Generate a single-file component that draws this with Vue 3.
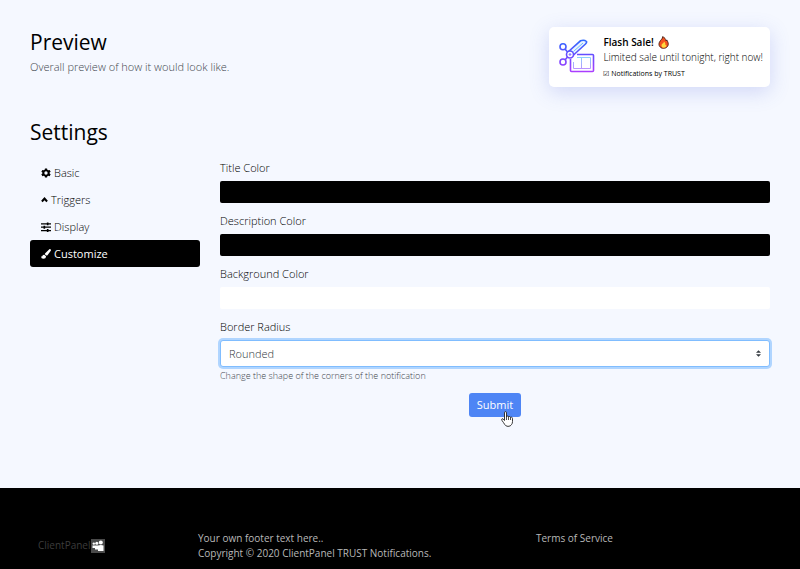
<template>
  <div class="page">
    <main class="content">
      <header class="preview">
        <div>
          <h1>Preview</h1>
          <p class="subtitle">Overall preview of how it would look like.</p>
        </div>

        <div class="toast">
          <svg class="toast-icon" viewBox="0 0 36 36" fill="none" stroke="url(#toast-gradient)" aria-hidden="true">
            <defs>
              <linearGradient id="toast-gradient" gradientUnits="userSpaceOnUse" x1="0" y1="0" x2="0" y2="34">
                <stop offset="0" stop-color="#2b6cff" />
                <stop offset="0.5" stop-color="#6a4cff" />
                <stop offset="1" stop-color="#b03cff" />
              </linearGradient>
              <linearGradient id="ticket-gradient" gradientUnits="userSpaceOnUse" x1="0" y1="16" x2="0" y2="31">
                <stop offset="0" stop-color="#7fe0fb" />
                <stop offset="1" stop-color="#c08cff" />
              </linearGradient>
            </defs>
            <path stroke-width="1.6" d="M18 15.500H33.500Q34.500 15.500 34.500 16.500V31.500Q34.500 32.500 33.500 32.500H12.500Q11.500 32.500 11.500 31.500V20" />
            <path stroke="url(#ticket-gradient)" stroke-width="1" d="M18 18.500H31.500V29.500H14.500V23M22.500 18.500V29.500" />
            <path stroke-width="1.600" fill="#eaf4ff" d="M9.500 12.500L21.500 1.800Q25 .4 27.500 2.500Q28 3.500 26.500 5L14 16.500Z" />
            <path stroke="#69b8ff" stroke-width="1" d="M14.500 12.500L24 4" />
            <circle cx="11" cy="15.500" r="3.500" stroke-width="1.600" fill="#fff" />
            <circle cx="11" cy="15.500" r="0.800" stroke-width="1" />
            <circle cx="4" cy="7.800" r="3" stroke-width="1.600" />
            <circle cx="4" cy="23" r="3" stroke-width="1.600" />
            <path stroke-width="1.600" d="M6 10L8.500 13M6 21L8.500 18" />
          </svg>
          <div>
            <div class="toast-title">
              Flash Sale!
              <svg class="flame" viewBox="0 0 12 14" aria-hidden="true">
                <path d="M5 .6C5.400 3 2.700 4 1.600 6.600C-.2 10 2.500 13.400 6 13.400C9.600 13.400 12 10.500 11 7.200C10.700 6 10 5 9.600 4.200L8.800 5.300C8.600 3.200 7.200 1.500 5 .6Z" fill="#f4511e" stroke="#3a1408" stroke-width=".9" />
                <path d="M6.500 6C6.500 8 4.700 7.800 4 9.300C3.400 11 4.300 12.700 6.100 12.800C8.200 12.800 9.500 11.400 9 9.500L8 10C8.300 8.400 7.800 7 6.500 6Z" fill="#ffd83b" />
              </svg>
            </div>
            <div class="toast-text">Limited sale until tonight, right now!</div>
            <div class="toast-brand">☑ Notifications by TRUST</div>
          </div>
        </div>
      </header>

      <h2>Settings</h2>

      <div class="row">
        <nav class="tabs">
          <button
            v-for="tab in tabs"
            :key="tab.id"
            type="button"
            :class="{ active: current === tab.id }"
            @click="current = tab.id"
          >
            <svg :class="{ narrow: tab.narrow }" :viewBox="tab.box" aria-hidden="true">
              <path :d="tab.icon" fill="currentColor" fill-rule="evenodd" />
            </svg>
            <span>{{ tab.label }}</span>
          </button>
        </nav>

        <form class="fields" @submit.prevent>
          <div v-for="field in colors" :key="field.id" class="field">
            <label :for="field.id">{{ field.label }}</label>
            <input :id="field.id" v-model="field.value" type="color" />
          </div>

          <div class="field">
            <label for="radius">Border Radius</label>
            <div class="select-wrap">
              <select id="radius" v-model="radius">
                <option value="straight">Straight</option>
                <option value="rounded">Rounded</option>
                <option value="round">Round</option>
              </select>
              <svg class="arrows" viewBox="0 0 6 8" aria-hidden="true">
                <path d="M3 0L6 3H0ZM3 8L0 5H6Z" fill="#343a40" />
              </svg>
            </div>
            <small>Change the shape of the corners of the notification</small>
          </div>

          <div class="actions">
            <button type="submit" class="submit">Submit</button>
            <svg class="pointer" viewBox="0 0 12 16" aria-hidden="true">
              <path d="M3.500 9.500V1.800Q3.500 .6 4.500 .6Q5.500 .6 5.500 1.800V6Q5.600 4.900 6.500 5Q7.500 5 7.500 6Q7.700 5.300 8.500 5.500Q9.500 5.600 9.500 6.600Q9.900 6 10.600 6.200Q11.500 6.500 11.500 7.500V10.500Q11.500 12.500 10.500 13.600Q9.500 15.400 7 15.400Q4.800 15.300 3.800 13.600Q2.500 11.500 1 9.500Q.2 8.300 1 7.800Q2 7.300 3.500 9.500Z" fill="#fff" stroke="#222" stroke-width=".9" />
              <path d="M5.500 6V9M7.500 6V9M9.500 6.600V9" stroke="#222" stroke-width=".8" />
            </svg>
          </div>
        </form>
      </div>
    </main>

    <footer class="footer">
      <a class="logo" href="#">
        <span>ClientPanel</span>
        <svg viewBox="0 0 14 14" aria-hidden="true">
          <rect width="14" height="14" fill="#4a4a4a" />
          <g fill="#fff">
            <circle cx="2.800" cy="4.600" r="1.200" />
            <circle cx="5.800" cy="4.200" r="1.500" />
            <circle cx="9.800" cy="3.600" r="2" />
            <path d="M1.500 6.500H4V9H1.500ZM4 6.500H7V10.500H4ZM7 6.500Q10 5.500 12.500 6.500V12H7Z" />
          </g>
        </svg>
      </a>
      <div class="footer-text">
        <div>Your own footer text here..</div>
        <div>Copyright © 2020 ClientPanel TRUST Notifications.</div>
      </div>
      <a class="terms" href="#">Terms of Service</a>
    </footer>
  </div>
</template>

<script setup>
import { ref } from 'vue'

const current = ref('customize')
const radius = ref('rounded')

const colors = ref([
  { id: 'title-color', label: 'Title Color', value: '#000000' },
  { id: 'description-color', label: 'Description Color', value: '#000000' },
  { id: 'background-color', label: 'Background Color', value: '#ffffff' },
])

const tabs = [
  {
    id: 'basic',
    label: 'Basic',
    box: '0 0 24 24',
    icon: 'M9.500 1H14.500L15.200 4.300L17.500 5.600L20.700 4.500L23.200 8.800L20.700 11V13L23.200 15.200L20.700 19.500L17.500 18.400L15.200 19.700L14.500 23H9.500L8.800 19.700L6.500 18.400L3.300 19.500L.8 15.200L3.300 13V11L.8 8.800L3.300 4.500L6.500 5.600L8.800 4.300ZM12 8A4 4 0 1 0 12 16A4 4 0 1 0 12 8Z',
  },
  {
    id: 'triggers',
    label: 'Triggers',
    box: '0 0 16 24',
    narrow: true,
    icon: 'M8 5L16 13.500L12.500 17.500L8 12.500L3.500 17.500L0 13.500Z',
  },
  {
    id: 'display',
    label: 'Display',
    box: '0 0 24 24',
    icon: 'M0 3H14V1H18V3H24V6H18V8H14V6H0ZM0 11H6V9H10V11H24V14H10V16H6V14H0ZM0 19H14V17H18V19H24V22H18V24H14V22H0Z',
  },
  {
    id: 'customize',
    label: 'Customize',
    box: '0 0 24 24',
    icon: 'M20 .6Q22 -.4 23.400 1Q24.500 2.300 23.500 4L16 14.500Q14.500 16.300 12.800 15.500L9.800 13Q8.800 11.500 10.200 10ZM8 14L12 17.500Q12 23.500 5.500 23.500Q.3 23.500 0 17.500Q2 19 3 17.500Q4.500 13.500 8 14Z',
  },
]
</script>

<style>
body {
  margin: 0;
  background: #f5f8ff;
}
</style>

<style scoped>
.page {
  display: flex;
  flex-direction: column;
  min-height: 100vh;
  font-family: 'Open Sans', 'Noto Sans', sans-serif;
  font-size: 11px;
  font-weight: 300;
  line-height: 16px;
  color: #000;
}
button,
select,
input {
  font: inherit;
  margin: 0;
}
.content {
  padding: 27px 30px 71px;
}
.preview {
  display: flex;
  justify-content: space-between;
  align-items: flex-start;
}
h1,
h2 {
  margin: 0;
  font-size: 21px;
  line-height: 30px;
  font-weight: 500;
  color: #000;
}
.subtitle {
  margin: 2px 0 0;
  color: #3f474e;
}
.toast {
  display: flex;
  gap: 8px;
  padding: 7px 7px 5px 10px;
  background: #fff;
  border-radius: 5px;
  box-shadow: 0 5px 20px rgba(80, 100, 220, 0.22);
}
.toast-icon {
  width: 36px;
  height: 36px;
  margin-top: 5px;
}
.toast-title {
  display: flex;
  align-items: center;
  gap: 4px;
  font-size: 10px;
  font-weight: 600;
  color: #000;
}
.flame {
  width: 11px;
  height: 13px;
}
.toast-text {
  font-size: 10px;
  line-height: 15px;
}
.toast-brand {
  font-size: 7px;
  font-weight: 400;
  line-height: 17px;
}
h2 {
  margin-top: 30px;
}
.row {
  display: flex;
  margin: 12px -10px 0;
}
.tabs {
  box-sizing: border-box;
  width: 25%;
  padding: 0 10px;
}
.tabs button {
  display: flex;
  align-items: center;
  gap: 3px;
  width: 100%;
  padding: 5px 11px;
  border: 0;
  border-radius: 3px;
  background: none;
  color: #000;
  line-height: 17px;
  cursor: pointer;
}
.tabs button.active {
  background: #000;
  color: #fff;
  font-weight: 400;
}
.tabs svg {
  width: 10px;
  height: 10px;
}
.tabs svg.narrow {
  width: 7px;
}
.fields {
  flex: 1;
  padding: 0 10px;
}
.field {
  margin-bottom: 9px;
}
.field label {
  display: block;
  margin-bottom: 4px;
  line-height: 18px;
}
.field input {
  display: block;
  width: 100%;
  height: 22px;
  padding: 0;
  border: 0;
  border-radius: 2px;
  overflow: hidden;
  appearance: none;
  background: none;
}
.field input::-webkit-color-swatch-wrapper {
  padding: 0;
}
.field input::-webkit-color-swatch {
  border: 0;
}
.select-wrap {
  position: relative;
}
.field select {
  display: block;
  box-sizing: border-box;
  width: 100%;
  height: 27px;
  padding: 0 8px;
  border: 1px solid #80bdff;
  border-radius: 3px;
  outline: none;
  appearance: none;
  background: #fff;
  color: #2f363c;
  box-shadow: 0 0 0 2px #b0d5ff;
}
.arrows {
  position: absolute;
  top: 10px;
  right: 9px;
  width: 5px;
  height: 7px;
  pointer-events: none;
}
small {
  display: block;
  font-size: 9px;
  line-height: 17px;
  color: #3f474e;
}
.actions {
  position: relative;
  width: fit-content;
  margin: 0 auto;
}
.submit {
  padding: 4px 8px;
  border: 0;
  border-radius: 3px;
  background: #4e85f5;
  color: #fff;
  font-weight: 400;
  cursor: pointer;
}
.pointer {
  position: absolute;
  top: 18px;
  right: 8px;
  width: 12px;
  height: 16px;
}
.footer {
  flex: 1;
  display: flex;
  align-items: flex-start;
  padding: 43px 30px 8px;
  background: #000;
  color: #b8b8b8;
  font-size: 10px;
  font-weight: 400;
  line-height: 15px;
}
.footer a {
  color: inherit;
  text-decoration: none;
}
.footer .logo {
  display: flex;
  align-items: center;
  box-sizing: border-box;
  width: 168px;
  padding: 7px 8px 0;
  color: #3c3c3c;
}
.logo svg {
  width: 14px;
  height: 14px;
}
.footer-text {
  width: 338px;
}
</style>
